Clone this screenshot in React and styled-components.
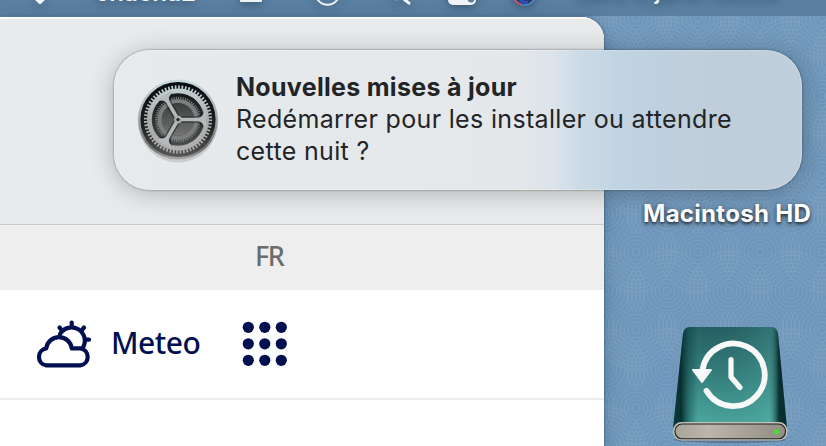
import styled, { createGlobalStyle } from "styled-components";

const GlobalStyle = createGlobalStyle`
  body {
    margin: 0;
    overflow: hidden;
  }
  svg {
    display: block;
    flex: none;
  }
`;

const Desktop = styled.main`
  position: relative;
  display: flex;
  flex-direction: column;
  width: 826px;
  height: 446px;
  overflow: hidden;
  background-color: #6e96ba;
  font-family: Inter, "Liberation Sans", sans-serif;
`;

const Wallpaper = styled.svg`
  position: absolute;
  inset: 0;
`;

const MenuBar = styled.header`
  position: relative;
  display: flex;
  align-items: flex-start;
  flex: none;
  height: 16px;
  overflow: hidden;
  background-color: #5a7fa1;
`;

const MenuText = styled.span`
  margin-left: ${(props) => props.gap}px;
  margin-top: ${(props) => props.lift}px;
  width: ${(props) => props.width}px;
  flex: none;
  white-space: nowrap;
  font-size: 24px;
  font-weight: ${(props) => props.weight};
  line-height: 28px;
  letter-spacing: ${(props) => props.spacing || 0}px;
  color: #f1f4f7;
  text-shadow: 0 2px 9px rgba(20, 35, 50, 0.5);
`;

const MenuIcon = styled.svg`
  margin-left: ${(props) => props.$gap}px;
  overflow: visible;
  filter: drop-shadow(0 2px 5px rgba(20, 35, 50, 0.45));
`;

const Workspace = styled.div`
  position: relative;
  display: flex;
  flex: 1;
  padding-top: 1px;
`;

const BrowserWindow = styled.section`
  display: flex;
  flex-direction: column;
  width: 604px;
  overflow: hidden;
  border-top-right-radius: 22px;
  background-color: white;
  box-shadow: 0 0 2px rgba(20, 40, 60, 0.75), 0 3px 16px rgba(20, 40, 60, 0.3);
`;

const Toolbar = styled.div`
  height: 207px;
  flex: none;
  background-color: #e8eaeb;
  border-bottom: 1px solid #c9c9ca;
  box-shadow: inset 0 2px 0 #f8f9f9;
`;

const LanguageBar = styled.div`
  display: flex;
  height: 65px;
  flex: none;
  padding-left: 255px;
  background-color: #eeeeee;
  color: #6c6c6c;
  font-family: "Noto Sans", "Open Sans", sans-serif;
  font-size: 27px;
  font-weight: 500;
  line-height: 61px;
  letter-spacing: -1.4px;
`;

const SiteNav = styled.nav`
  display: flex;
  align-items: center;
  height: 108px;
  flex: none;
  padding-left: 34px;
  border-bottom: 2px solid #ededed;
  color: #000f50;

  span {
    width: 131px;
    margin: -3px 0 0 17px;
    font-family: "Noto Sans", "Open Sans", sans-serif;
    font-size: 30px;
    font-weight: 500;
    line-height: 40px;
    letter-spacing: -0.5px;
  }
`;

const Volumes = styled.aside`
  display: flex;
  flex-direction: column;
  align-items: center;
  flex: 1;
  padding: 182px 0 0 24px;
`;

const VolumeName = styled.div`
  margin-bottom: 95px;
  font-size: 24px;
  font-weight: 700;
  line-height: 30px;
  letter-spacing: 0.3px;
  white-space: nowrap;
  color: white;
  text-shadow: 0 2px 3px rgba(0, 0, 0, 0.6), 0 1px 6px rgba(0, 0, 0, 0.35);
`;

const DriveSlot = styled.div`
  padding-left: 6px;
`;

const Notification = styled.div`
  position: absolute;
  left: 114px;
  top: 50px;
  display: flex;
  width: 688px;
  height: 140px;
  box-sizing: border-box;
  padding: 20px 0 0 20px;
  border-radius: 36px;
  background: linear-gradient(
    90deg,
    #e6eaed 0%,
    #e5e8eb 58%,
    #dce3ea 64%,
    #cbdae5 68%,
    #c2d4e3 73%,
    #bfd0de 79%,
    #c0ceda 88%,
    #bfcfda 100%
  );
  box-shadow: 0 0 2px rgba(0, 0, 0, 0.55), 0 3px 24px rgba(0, 0, 0, 0.25),
    inset 0 0 0 1px rgba(255, 255, 255, 0.22);
  color: #222425;
`;

const Message = styled.div`
  margin-left: 14px;
  padding-top: 1px;
  font-size: 25px;
  line-height: 32px;
  letter-spacing: 0.33px;
  white-space: nowrap;

  h1 {
    margin: 0;
    font-size: 25px;
    font-weight: 700;
    letter-spacing: 0.3px;
  }
  p {
    margin: 0;
  }
`;

const rings = [4, 8, 12, 16, 20, 24, 28, 32, 36, 40];

const Ripples = () => (
  <Wallpaper width="826" height="446">
    <defs>
      <pattern id="ripples" width="62" height="78" patternUnits="userSpaceOnUse">
        <g fill="none" stroke="#a9c1d4" strokeWidth="0.8" opacity="0.25">
          {rings.map((r) => (
            <g key={r}>
              <circle cx="16" cy="18" r={r} />
              <circle cx="47" cy="57" r={r} />
              <circle cx="78" cy="18" r={r} />
              <circle cx="-15" cy="57" r={r} />
            </g>
          ))}
        </g>
      </pattern>
    </defs>
    <rect width="826" height="446" fill="url(#ripples)" />
  </Wallpaper>
);

const GearIcon = () => (
  <svg width="88" height="100" viewBox="-44 -49.5 88 100">
    <defs>
      <linearGradient id="rim" x1="0" y1="0" x2="0" y2="1">
        <stop offset="0" stopColor="#c9dade" />
        <stop offset="0.5" stopColor="#a3a7a8" />
        <stop offset="0.85" stopColor="#6d6d6d" />
        <stop offset="1" stopColor="#a9a9a9" />
      </linearGradient>
      <linearGradient id="well" x1="0" y1="0" x2="0" y2="1">
        <stop offset="0" stopColor="#060c0e" />
        <stop offset="0.6" stopColor="#1f2020" />
        <stop offset="1" stopColor="#585858" />
      </linearGradient>
      <linearGradient id="metal" gradientUnits="userSpaceOnUse" x1="0" y1="-34" x2="0" y2="34">
        <stop offset="0" stopColor="#c6d3d6" />
        <stop offset="0.5" stopColor="#a9adae" />
        <stop offset="1" stopColor="#b2b0af" />
      </linearGradient>
      <linearGradient id="innerWell" x1="0" y1="0" x2="0" y2="1">
        <stop offset="0" stopColor="#161818" />
        <stop offset="1" stopColor="#4c4c4c" />
      </linearGradient>
      <linearGradient id="core" x1="0" y1="0" x2="0" y2="1">
        <stop offset="0" stopColor="#3c3d3d" />
        <stop offset="1" stopColor="#747474" />
      </linearGradient>
    </defs>
    <ellipse cx="0" cy="2.5" rx="40" ry="40.5" fill="#000" opacity="0.12" />
    <circle r="40" fill="url(#rim)" />
    <circle r="37.6" fill="url(#well)" />
    <circle r="32.2" fill="none" stroke="url(#metal)" strokeWidth="3.8" strokeDasharray="1.7 1.67" />
    <circle r="26.5" fill="url(#innerWell)" />
    <circle r="21.6" fill="none" stroke="#7b7e7e" strokeWidth="2.4" strokeDasharray="1.2 1.1" />
    <circle r="18.4" fill="none" stroke="#7b7e7e" strokeWidth="4.4" />
    <circle r="16.2" fill="url(#core)" />
    <circle r="28.6" fill="none" stroke="url(#metal)" strokeWidth="4.8" />
    {[0, 120, 240].map((angle) => (
      <g key={angle} transform={`rotate(${angle})`}>
        <path d="M3 3.2H20L26 8V-8L20-3.2H3" fill="#151616" opacity="0.5" />
        <path d="M2-1.8H20Q24.5-2 25.5-7L28-8V8L25.5 7Q24.5 2 20 1.8H2Z" fill="#b4babb" />
      </g>
    ))}
    <circle r="3.8" fill="#aab0b1" />
    <circle r="1.6" fill="#171b1c" />
  </svg>
);

const MeteoIcon = () => (
  <svg width="60" height="52" viewBox="34 318 60 52">
    <g fill="none" stroke="#000f50" strokeWidth="4.2" strokeLinecap="round" strokeLinejoin="round">
      <path d="M46.3 365.4H80.4A8.6 8.6 0 0 0 80.4 348.4H71.8A12.9 12.9 0 0 0 46.2 348.4A8.6 8.6 0 0 0 46.3 365.4Z" />
      <path d="M60 334A13.2 13.2 0 1 1 83 347.5" />
      <path d="M71.7 322.5V325M59.5 327.5L61.5 329.8M84 327.5L82 329.8M86.3 339.7H89" />
    </g>
  </svg>
);

const AppsIcon = () => (
  <svg width="46" height="46" viewBox="0 0 46 46" fill="#000f50">
    {[6.3, 22.8, 39.3].map((y) =>
      [6.3, 22.8, 39.3].map((x) => <circle key={`${x}-${y}`} cx={x} cy={y} r="5.6" />)
    )}
  </svg>
);

const TimeMachineDrive = () => (
  <svg width="124" height="122" viewBox="668 324 124 122">
    <defs>
      <linearGradient id="caseDown" x1="0" y1="0" x2="0" y2="1">
        <stop offset="0" stopColor="#265f63" />
        <stop offset="0.5" stopColor="#37827f" />
        <stop offset="1" stopColor="#4fada3" />
      </linearGradient>
      <linearGradient id="caseEdges" x1="0" y1="0" x2="1" y2="0">
        <stop offset="0" stopColor="#0c3b3d" />
        <stop offset="0.07" stopColor="#062a2c" stopOpacity="0.95" />
        <stop offset="0.14" stopColor="#0b4142" stopOpacity="0.45" />
        <stop offset="0.22" stopColor="#0b4142" stopOpacity="0" />
        <stop offset="0.84" stopColor="#58b0a8" stopOpacity="0.25" />
        <stop offset="0.93" stopColor="#042526" stopOpacity="0.9" />
        <stop offset="1" stopColor="#062c2e" />
      </linearGradient>
      <linearGradient id="front" x1="0" y1="0" x2="1" y2="0">
        <stop offset="0" stopColor="#a8a498" />
        <stop offset="0.3" stopColor="#bcb5ab" />
        <stop offset="1" stopColor="#918d83" />
      </linearGradient>
    </defs>
    <ellipse cx="730" cy="440" rx="56" ry="3" fill="#24394b" opacity="0.35" />
    <path d="M690 327H771Q777 327 778 334L787 428H673L683 334Q684 327 690 327Z" fill="url(#caseDown)" />
    <path d="M690 327H771Q777 327 778 334L787 428H673L683 334Q684 327 690 327Z" fill="url(#caseEdges)" />
    <rect x="673" y="422" width="114.5" height="18.5" rx="8.5" fill="#c4c1b9" />
    <rect x="675" y="424" width="110.5" height="14.8" rx="7" fill="url(#front)" stroke="#1d2020" strokeWidth="1.1" />
    <circle cx="776.5" cy="431.7" r="2.7" fill="#54d437" />
    <g fill="none" stroke="#f7f8f8" strokeWidth="5.7" strokeLinecap="round" strokeLinejoin="round">
      <path d="M702.5 370A31.3 31.3 0 1 1 706.5 390.8" strokeWidth="5.8" />
      <path d="M731 359.5V377L740 387.5" strokeWidth="5.2" />
    </g>
    <path d="M693 370H711L702 382Z" fill="#f7f8f8" stroke="#f7f8f8" strokeWidth="2" strokeLinejoin="round" />
  </svg>
);

const App = () => {
  return (
    <>
      <GlobalStyle />
      <Desktop>
        <Ripples />
        <MenuBar>
          <MenuIcon $gap={34} width="12" height="6">
            <path d="M0-1H12L7 3.8Q6 4.6 5 3.8Z" fill="#f1f4f7" />
          </MenuIcon>
          <MenuText gap={49} lift={-21} width={99} weight={600} spacing={0.2}>
            chacha2
          </MenuText>
          <MenuIcon $gap={46} width="22" height="6">
            <rect y="-6" width="22" height="8" rx="1" fill="#f1f4f7" />
          </MenuIcon>
          <MenuIcon $gap={53} width="28" height="8">
            <circle cx="12.5" cy="-7.5" r="12.2" fill="none" stroke="#f1f4f7" strokeWidth="2" />
          </MenuIcon>
          <MenuIcon $gap={48} width="24" height="8">
            <path d="M0-4A8 8 0 0 0 8-1" fill="none" stroke="#b9c8d5" strokeWidth="2.2" />
            <path d="M9-4L18 3.2" stroke="#f1f4f7" strokeWidth="3" strokeLinecap="round" />
          </MenuIcon>
          <MenuIcon $gap={33} width="28" height="8">
            <rect y="-11" width="28" height="16" rx="5" fill="#f1f4f7" />
            <circle cx="23" cy="-1" r="3.4" fill="#5a7fa1" />
          </MenuIcon>
          <MenuIcon $gap={36} width="24" height="8">
            <circle cx="12.5" cy="-6" r="11" fill="#25385d" stroke="#4d91c6" strokeWidth="1.4" />
            <path d="M2-1Q5 4 10 4.5" fill="none" stroke="#bd506f" strokeWidth="2" />
            <path d="M7-2Q11 4 16 2" fill="none" stroke="#314ec1" strokeWidth="3" />
          </MenuIcon>
          <MenuText gap={42} lift={-23} width={225} weight={500} spacing={-0.4}>
            Dim. 3 janv. 00:36
          </MenuText>
        </MenuBar>
        <Workspace>
          <BrowserWindow>
            <Toolbar />
            <LanguageBar>FR</LanguageBar>
            <SiteNav>
              <MeteoIcon />
              <span>Meteo</span>
              <AppsIcon />
            </SiteNav>
          </BrowserWindow>
          <Volumes>
            <VolumeName>Macintosh HD</VolumeName>
            <DriveSlot>
              <TimeMachineDrive />
            </DriveSlot>
          </Volumes>
        </Workspace>
        <Notification>
          <GearIcon />
          <Message>
            <h1>Nouvelles mises à jour</h1>
            <p>
              Redémarrer pour les installer ou attendre
              <br />
              cette nuit ?
            </p>
          </Message>
        </Notification>
      </Desktop>
    </>
  );
};

export default App;
